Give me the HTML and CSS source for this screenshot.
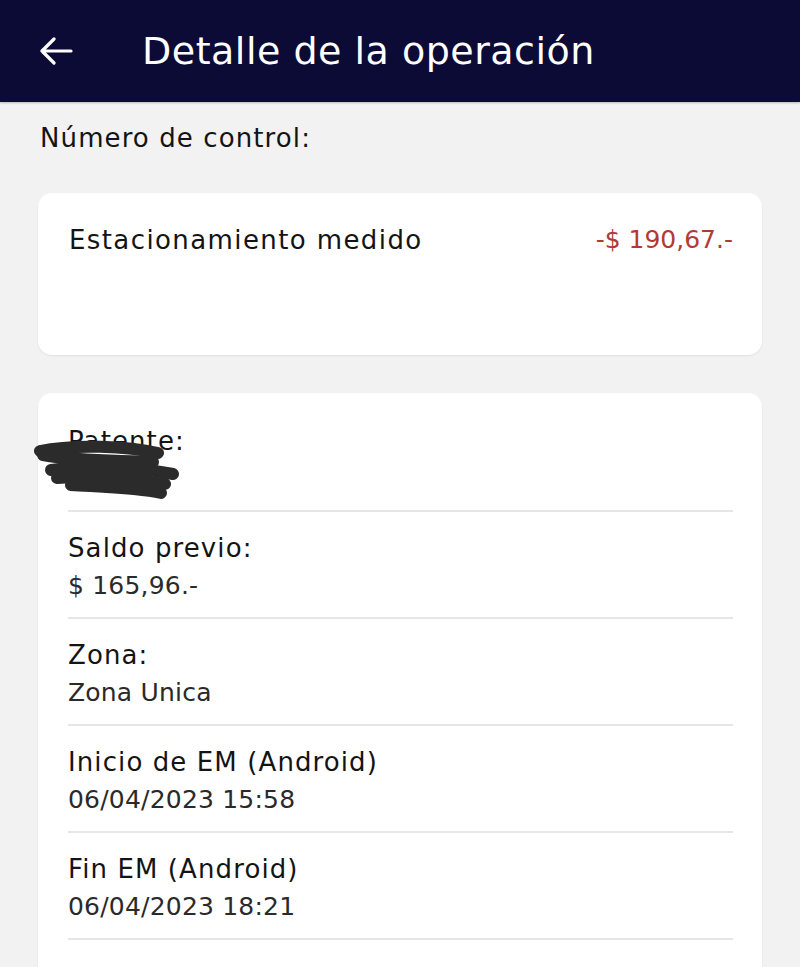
FILE: index.html
```html
<!DOCTYPE html>
<html lang="es">
<head>
<meta charset="utf-8">
<title>Detalle de la operación</title>
<link rel="stylesheet" href="styles.css">
</head>
<body>
<header class="topbar">
  <svg class="back" width="34" height="28" viewBox="0 0 34 28" aria-hidden="true">
    <path d="M32 14H3M15 2L3 14l12 12" fill="none" stroke="#fff" stroke-width="3.2" stroke-linecap="round" stroke-linejoin="round"/>
  </svg>
  <h1 class="title">Detalle de la operación</h1>
</header>
<main class="content">
  <p class="control">Número de control:</p>
  <section class="card card-summary">
    <div class="summary-row">
      <span class="summary-label">Estacionamiento medido</span>
      <span class="summary-amount">-$ 190,67.-</span>
    </div>
  </section>
  <section class="card card-details">
    <div class="row">
      <div class="label">Patente:</div>
      <div class="value">&nbsp;</div>
      <svg class="scribble" width="160" height="70" viewBox="0 0 160 70" aria-hidden="true">
        <g fill="none" stroke="#2b2b2b" stroke-linecap="round" stroke-width="12">
          <path d="M7 11 C40 4 95 6 125 13"/>
          <path d="M10 15 C50 22 90 20 120 22"/>
          <path d="M18 30 C55 25 105 27 140 34"/>
          <path d="M24 38 C60 35 100 39 132 44"/>
          <path d="M38 45 C70 47 105 48 128 53"/>
        </g>
      </svg>
    </div>
    <div class="row">
      <div class="label">Saldo previo:</div>
      <div class="value">$ 165,96.-</div>
    </div>
    <div class="row">
      <div class="label">Zona:</div>
      <div class="value">Zona Unica</div>
    </div>
    <div class="row">
      <div class="label">Inicio de EM (Android)</div>
      <div class="value">06/04/2023 15:58</div>
    </div>
    <div class="row">
      <div class="label">Fin EM (Android)</div>
      <div class="value">06/04/2023 18:21</div>
    </div>
  </section>
</main>
</body>
</html>
```
FILE: styles.css
```css
* { box-sizing: border-box; }
html, body { margin: 0; padding: 0; }
body {
  background: #f2f2f2;
  font-family: "DejaVu Sans", "Noto Sans", sans-serif;
  color: #141414;
  width: 800px;
  height: 967px;
  overflow: hidden;
}
.topbar {
  height: 102px;
  background: #0b0b36;
  display: flex;
  align-items: center;
  padding-left: 39px;
  box-shadow: 0 1px 2px rgba(0,0,0,0.25);
}
.back { display: block; }
.title {
  margin: 0 0 0 69px;
  font-weight: 400;
  font-size: 38px;
  letter-spacing: 0.5px;
  color: #fff;
}
.content { padding: 20px 38px 0 38px; }
.control {
  margin: 0 0 0 2px;
  font-size: 26px;
  line-height: 32px;
  letter-spacing: 1.1px;
}
.card {
  background: #fff;
  border-radius: 14px;
  box-shadow: 0 1px 2px rgba(0,0,0,0.08);
}
.card-summary {
  margin-top: 39px;
  height: 162px;
  padding: 30px 29px 0 31px;
}
.summary-row {
  display: flex;
  justify-content: space-between;
  font-size: 26px;
  line-height: 34px;
}
.summary-label { letter-spacing: 1.4px; }
.summary-amount { color: #b23a35; font-size: 25px; letter-spacing: 0; }
.card-details {
  margin-top: 38px;
  height: 600px;
  padding: 24px 29px 0 30px;
}
.row {
  position: relative;
  border-bottom: 2px solid #e6e6e6;
  height: 107px;
  padding-top: 18px;
}
.row:first-child { height: 95px; padding-top: 6px; }
.label { font-size: 26px; line-height: 37px; color: #141414; letter-spacing: 1.1px; }
.value { font-size: 25px; line-height: 37px; color: #2a2a2a; letter-spacing: 0.2px; }
.scribble { position: absolute; left: -35px; top: 23px; }
```
